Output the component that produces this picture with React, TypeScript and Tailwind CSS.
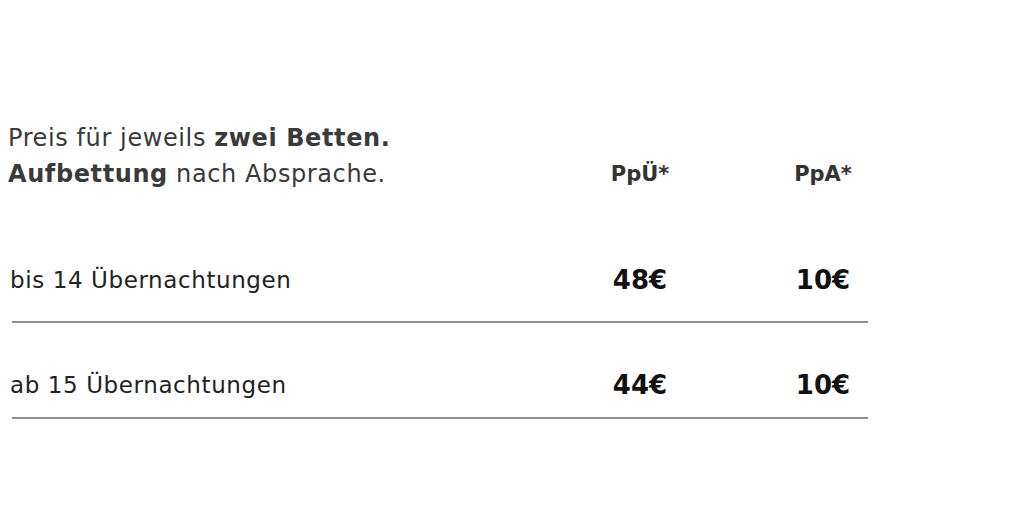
import React from "react";

const font = { fontFamily: '"DejaVu Sans", "Open Sans", sans-serif' };

function Row({ label, p1, p2 }: { label: string; p1: string; p2: string }) {
  return (
    <div>
      <div className="flex items-center h-[30px]">
        <div className="w-[572px] pl-[2px] text-[23px] tracking-[0.6px] text-[#222]">{label}</div>
        <div className="w-[120px] text-center text-[26px] font-bold text-[#111]">{p1}</div>
        <div className="w-[78px]" />
        <div className="w-[90px] text-center text-[26px] font-bold text-[#111]">{p2}</div>
      </div>
    </div>
  );
}

export default function App() {
  return (
    <div className="w-[1024px] h-[524px] bg-white overflow-hidden" style={font}>
      <div className="pl-2 pt-[120px]">
        <div className="flex items-end">
          <div className="w-[572px] text-[24px] tracking-[0.6px] leading-[36px] text-[#3a3a3a]">
            <div>
              Preis für jeweils <span className="font-bold">zwei Betten.</span>
            </div>
            <div>
              <span className="font-bold">Aufbettung</span> nach Absprache.
            </div>
          </div>
          <div className="w-[120px] text-center text-[21px] leading-[36px] font-bold text-[#333]">PpÜ*</div>
          <div className="w-[78px]" />
          <div className="w-[90px] text-center text-[21px] leading-[36px] font-bold text-[#333]">PpA*</div>
        </div>
        <div className="mt-[73px]">
          <Row label="bis 14 Übernachtungen" p1="48€" p2="10€" />
        </div>
        <div className="ml-1 mt-[26px] w-[856px] h-[2px] bg-[#8f8f8f]" />
        <div className="mt-[47px]">
          <Row label="ab 15 Übernachtungen" p1="44€" p2="10€" />
        </div>
        <div className="ml-1 mt-[17px] w-[856px] h-[2px] bg-[#8f8f8f]" />
      </div>
    </div>
  );
}
